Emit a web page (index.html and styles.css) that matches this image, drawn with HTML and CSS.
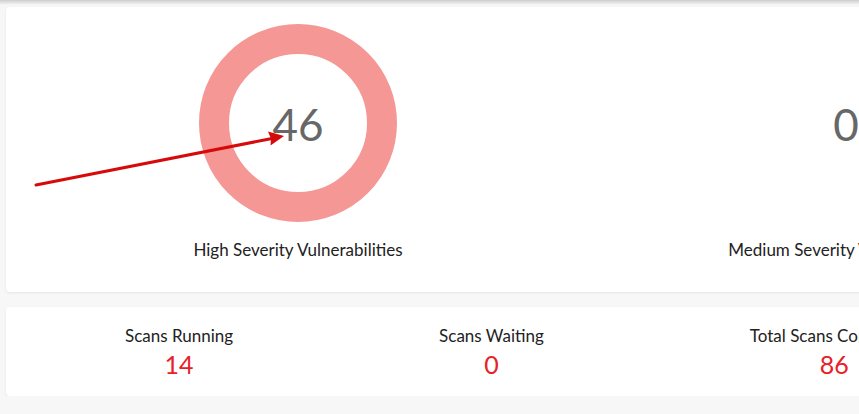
FILE: index.html
```html
<!DOCTYPE html>
<html lang="en">
<head>
  <meta charset="UTF-8">
  <meta name="viewport" content="width=device-width, initial-scale=1">
  <title>Scan Dashboard</title>
  <link rel="stylesheet" href="styles.css">
</head>
<body>
  <div class="topbar"></div>

  <div class="content">
    <div class="card severity">
      <div class="gauge">
        <div class="donut">
          <span class="count">46</span>
        </div>
        <div class="label">High Severity Vulnerabilities</div>
      </div>
      <div class="gauge">
        <div class="donut empty">
          <span class="count">0</span>
        </div>
        <div class="label">Medium Severity Vulnerabilities</div>
      </div>
      <div class="gauge">
        <div class="donut empty">
          <span class="count">0</span>
        </div>
        <div class="label">Low Severity Vulnerabilities</div>
      </div>
    </div>

    <div class="card scans">
      <div class="stat">
        <div class="stat-label">Scans Running</div>
        <div class="stat-value">14</div>
      </div>
      <div class="stat">
        <div class="stat-label">Scans Waiting</div>
        <div class="stat-value">0</div>
      </div>
      <div class="stat">
        <div class="stat-label">Total Scans Completed</div>
        <div class="stat-value">86</div>
      </div>
      <div class="stat">
        <div class="stat-label">Total Vulnerabilities</div>
        <div class="stat-value">46</div>
      </div>
    </div>
  </div>

  <!-- annotation arrow -->
  <svg class="pointer" width="300" height="200" viewBox="0 0 300 200">
    <line x1="36" y1="185" x2="272" y2="138.5" stroke="#d60a0a" stroke-width="3" stroke-linecap="round"/>
    <polygon points="284,136 268,131.5 271,138.7 270.5,145.5" fill="#d60a0a"/>
  </svg>
</body>
</html>
```

FILE: styles.css
```css
body {
  font-family: "Source Sans Pro", Lato, Arial, sans-serif;
  margin: 0;
  background-color: #f7f7f7;
  color: #222;
  overflow: hidden;
}

.topbar {
  height: 5px;
  background: linear-gradient(#cdcdcd, #f7f7f7);
}

.content {
  padding: 2px 6px 0;
  width: 1680px;
}

.card {
  background-color: #fff;
  border-radius: 4px;
  box-shadow: 0 1px 3px rgba(0, 0, 0, 0.08);
}

.severity {
  display: flex;
  height: 285px;
  padding: 0 18px;
}

.gauge {
  width: 548px;
  text-align: center;
}

.donut {
  width: 138px;
  height: 138px;
  margin: 17px auto 0;
  border: 30px solid #f59795;
  border-radius: 50%;
  display: flex;
  align-items: center;
  justify-content: center;
}

.donut.empty {
  border-color: transparent;
}

.count {
  font-size: 44px;
  color: #676767;
  line-height: 1;
  margin-top: 2px;
}

.label {
  margin-top: 16px;
  font-size: 17px;
  line-height: 24px;
}

.scans {
  display: flex;
  margin-top: 15px;
  padding: 17px 16px 16px;
}

.stat {
  margin: 0 103px;
  text-align: center;
}

.stat-label {
  font-size: 17px;
  line-height: 24px;
}

.stat-value {
  font-size: 25px;
  line-height: 32px;
  color: #e8202a;
}

.pointer {
  position: absolute;
  left: 0;
  top: 0;
}
```
